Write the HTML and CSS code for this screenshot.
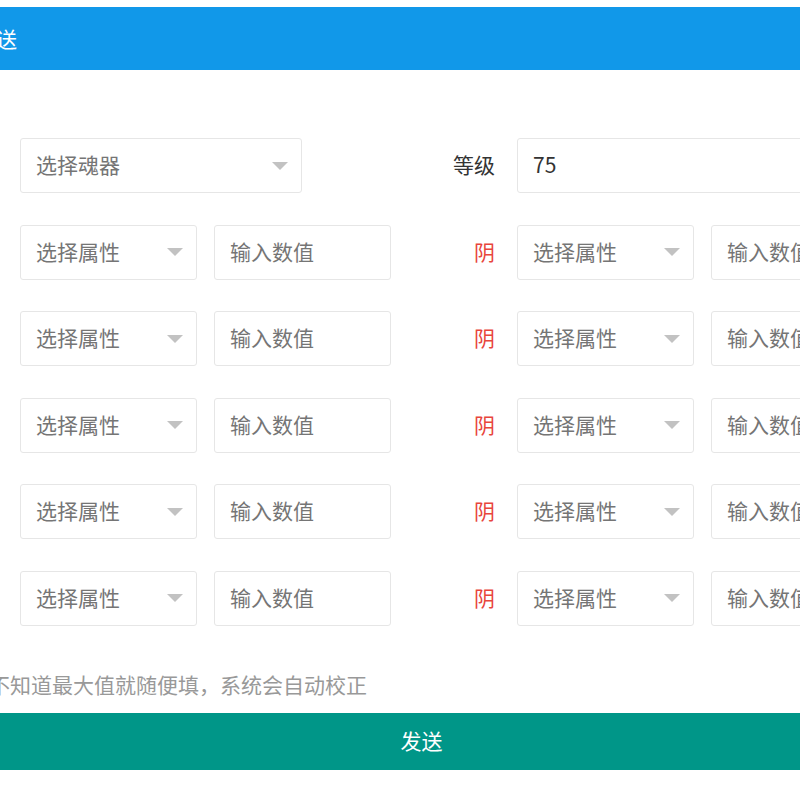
FILE: index.html
```html
<!DOCTYPE html>
<html lang="zh">
<head>
<meta charset="utf-8">
<title>发送</title>
<link rel="stylesheet" href="styles.css">
</head>
<body>
<div class="page">
  <div class="header">发送</div>
  <div class="form">
    <div class="row">
      <div class="left">
        <div class="select wide"><span>选择魂器</span><i class="caret"></i></div>
      </div>
      <div class="label">等级</div>
      <div class="right">
        <div class="input value wide2">75</div>
      </div>
    </div>
    <div class="row">
      <div class="left">
        <div class="select"><span>选择属性</span><i class="caret"></i></div>
        <div class="input">输入数值</div>
      </div>
      <div class="label red">阴</div>
      <div class="right">
        <div class="select"><span>选择属性</span><i class="caret"></i></div>
        <div class="input">输入数值</div>
      </div>
    </div>
    <div class="row">
      <div class="left">
        <div class="select"><span>选择属性</span><i class="caret"></i></div>
        <div class="input">输入数值</div>
      </div>
      <div class="label red">阴</div>
      <div class="right">
        <div class="select"><span>选择属性</span><i class="caret"></i></div>
        <div class="input">输入数值</div>
      </div>
    </div>
    <div class="row">
      <div class="left">
        <div class="select"><span>选择属性</span><i class="caret"></i></div>
        <div class="input">输入数值</div>
      </div>
      <div class="label red">阴</div>
      <div class="right">
        <div class="select"><span>选择属性</span><i class="caret"></i></div>
        <div class="input">输入数值</div>
      </div>
    </div>
    <div class="row">
      <div class="left">
        <div class="select"><span>选择属性</span><i class="caret"></i></div>
        <div class="input">输入数值</div>
      </div>
      <div class="label red">阴</div>
      <div class="right">
        <div class="select"><span>选择属性</span><i class="caret"></i></div>
        <div class="input">输入数值</div>
      </div>
    </div>
    <div class="row">
      <div class="left">
        <div class="select"><span>选择属性</span><i class="caret"></i></div>
        <div class="input">输入数值</div>
      </div>
      <div class="label red">阴</div>
      <div class="right">
        <div class="select"><span>选择属性</span><i class="caret"></i></div>
        <div class="input">输入数值</div>
      </div>
    </div>
  </div>
  <div class="hint">不知道最大值就随便填，系统会自动校正</div>
  <div class="submit">发送</div>
</div>
</body>
</html>
```
FILE: styles.css
```css
html, body {
  margin: 0;
  padding: 0;
  background: #ffffff;
  overflow: hidden;
}
body {
  font-family: "Noto Sans CJK SC", "Liberation Sans", sans-serif;
  font-size: 21px;
  color: #333333;
}
.page {
  width: 923px;
  margin-left: -40px;
  padding-top: 7px;
}
.header {
  height: 63px;
  line-height: 63px;
  background: #1198e9;
  color: #ffffff;
  padding-left: 15px;
  font-size: 21px;
}
.form {
  padding-left: 60px;
  padding-top: 68px;
}
.row {
  display: grid;
  grid-template-columns: 371px 126px 1fr;
  height: 55px;
  margin-bottom: 31.5px;
}
.row:last-child {
  margin-bottom: 0;
}
.left, .right {
  display: flex;
  gap: 17px;
}
.label {
  line-height: 52px;
  text-align: right;
  padding-right: 22px;
  color: #333333;
}
.label.red {
  color: #e8453c;
}
.select, .input {
  box-sizing: border-box;
  width: 177px;
  height: 55px;
  border: 1px solid #e6e6e6;
  border-radius: 3px;
  background: #ffffff;
  padding-left: 15px;
  line-height: 50px;
  color: #757575;
  white-space: nowrap;
  overflow: hidden;
}
.select {
  display: flex;
  align-items: center;
  justify-content: space-between;
  padding-right: 13px;
}
.select span {
  margin-top: -3px;
}
.select.wide {
  width: 282px;
}
.input.wide2 {
  width: 371px;
}
.input.value {
  color: #333333;
}
.caret {
  display: block;
  width: 0;
  height: 0;
  border-style: solid;
  border-width: 8px 8.5px 0 8.5px;
  border-color: #c2c2c2 transparent transparent transparent;
}
.hint {
  margin-top: 43px;
  padding-left: 29px;
  line-height: 30px;
  color: #999999;
}
.submit {
  margin-top: 14px;
  height: 57px;
  line-height: 54px;
  background: #009688;
  color: #ffffff;
  text-align: center;
}
```
